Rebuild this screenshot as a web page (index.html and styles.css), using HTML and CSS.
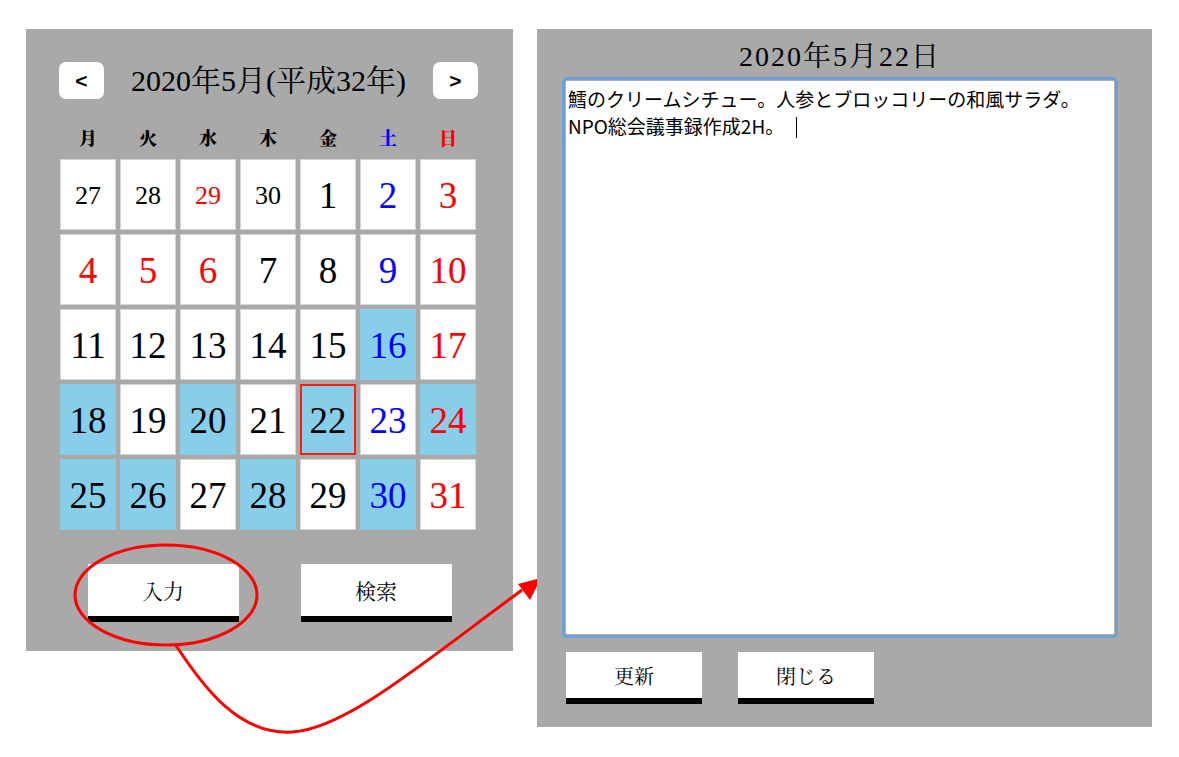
FILE: index.html
```html
<!DOCTYPE html>
<html lang="ja">
<head>
<meta charset="utf-8">
<title>カレンダー</title>
<link rel="stylesheet" href="styles.css">
</head>
<body>
<div class="page">
  <section class="cal">
    <div class="cal-head">
      <div class="nav-btn">&lt;</div>
      <div class="cal-title">2020年5月(平成32年)</div>
      <div class="nav-btn">&gt;</div>
    </div>
    <div class="weekdays">
      <span>月</span><span>火</span><span>水</span><span>木</span><span>金</span><span class="sat">土</span><span class="sun">日</span>
    </div>
    <div class="grid">
      <div class="cell small">27</div>
      <div class="cell small">28</div>
      <div class="cell small sun">29</div>
      <div class="cell small">30</div>
      <div class="cell">1</div>
      <div class="cell sat">2</div>
      <div class="cell sun">3</div>

      <div class="cell sun">4</div>
      <div class="cell sun">5</div>
      <div class="cell sun">6</div>
      <div class="cell">7</div>
      <div class="cell">8</div>
      <div class="cell sat">9</div>
      <div class="cell sun">10</div>

      <div class="cell">11</div>
      <div class="cell">12</div>
      <div class="cell">13</div>
      <div class="cell">14</div>
      <div class="cell">15</div>
      <div class="cell sat mark">16</div>
      <div class="cell sun">17</div>

      <div class="cell mark">18</div>
      <div class="cell">19</div>
      <div class="cell mark">20</div>
      <div class="cell">21</div>
      <div class="cell mark today">22</div>
      <div class="cell sat">23</div>
      <div class="cell sun mark">24</div>

      <div class="cell mark">25</div>
      <div class="cell mark">26</div>
      <div class="cell">27</div>
      <div class="cell mark">28</div>
      <div class="cell">29</div>
      <div class="cell sat mark">30</div>
      <div class="cell sun">31</div>
    </div>
    <div class="cal-actions">
      <div class="btn big">入力</div>
      <div class="btn big">検索</div>
    </div>
  </section>

  <section class="memo">
    <div class="memo-title">2020年5月22日</div>
    <div class="memo-text">鱈のクリームシチュー。人参とブロッコリーの和風サラダ。<br>NPO総会議事録作成2H。<span class="caret"></span></div>
    <div class="memo-actions">
      <div class="btn small-btn">更新</div>
      <div class="btn small-btn">閉じる</div>
    </div>
  </section>
</div>

<svg class="annot" width="1179" height="757" viewBox="0 0 1179 757" xmlns="http://www.w3.org/2000/svg">
  <defs>
    <clipPath id="leftOfPanel"><rect x="0" y="0" width="537" height="757"/></clipPath>
  </defs>
  <ellipse cx="166" cy="595" rx="91" ry="50" fill="none" stroke="#ff0000" stroke-width="3"/>
  <g clip-path="url(#leftOfPanel)">
    <path d="M175 644 C 205 690, 240 735, 292 732 C 345 729, 420 665, 522 590" fill="none" stroke="#ff0000" stroke-width="3"/>
    <polygon points="541,578 518,584 530,600" fill="#ff0000"/>
  </g>
</svg>
</body>
</html>
```

FILE: styles.css
```css
html, body {
  margin: 0;
  padding: 0;
  background: #ffffff;
}

body {
  font-family: "Liberation Serif", "Noto Serif CJK JP", "Noto Sans CJK JP", serif;
  color: #000;
  position: relative;
  width: 1179px;
  height: 757px;
  overflow: hidden;
}

.page {
  display: flex;
  align-items: flex-start;
  gap: 24px;
  padding: 29px 0 0 26px;
}

/* ---------- calendar ---------- */
.cal {
  width: 487px;
  height: 622px;
  box-sizing: border-box;
  background: #a9a9a9;
  padding-top: 33px;
}

.cal-head {
  width: 419px;
  margin-left: 33px;
  height: 37px;
  display: flex;
  align-items: center;
  justify-content: space-between;
}

.nav-btn {
  width: 45px;
  height: 37px;
  background: #fff;
  border-radius: 7px;
  display: flex;
  align-items: center;
  justify-content: center;
  font-family: "Liberation Sans", "Noto Sans CJK JP", sans-serif;
  font-size: 21px;
  font-weight: bold;
}

.cal-title {
  font-size: 30px;
  line-height: 37px;
  white-space: nowrap;
}

.weekdays {
  margin: 26px 0 0 34px;
  width: 416px;
  height: 24px;
  display: grid;
  grid-template-columns: repeat(7, 56px);
  column-gap: 4px;
  font-family: "Noto Serif CJK JP", "Noto Sans CJK JP", serif;
  font-weight: 900;
  font-size: 18px;
  line-height: 24px;
  text-align: center;
}

.grid {
  margin: 10px 0 0 34px;
  width: 416px;
  display: grid;
  grid-template-columns: repeat(7, 56px);
  grid-auto-rows: 71px;
  gap: 4px;
}

.cell {
  background: #fff;
  box-sizing: border-box;
  border: 1px solid #d6d6d6;
  display: flex;
  align-items: center;
  justify-content: center;
  font-size: 37px;
  line-height: 1;
  padding-top: 2px;
}

.cell.small {
  font-size: 26px;
}

.cell.mark {
  background: #87ceeb;
  border-color: #8ccbe4;
}

.cell.today {
  border: 2px solid #ff1a0a;
}

.sat { color: #0000ff; }
.sun { color: #ff0000; }

.cal-actions {
  margin-top: 34px;
  display: flex;
  justify-content: center;
  gap: 62px;
}

.btn {
  background: #fff;
  box-sizing: border-box;
  border-bottom: 6px solid #000;
  display: flex;
  align-items: center;
  justify-content: center;
  font-family: "Noto Serif CJK JP", "Noto Sans CJK JP", serif;
  font-size: 21px;
}

.btn.big {
  width: 151px;
  height: 58px;
}

/* ---------- memo ---------- */
.memo {
  width: 615px;
  height: 698px;
  box-sizing: border-box;
  background: #a9a9a9;
  padding: 8px 0 0 28px;
}

.memo-title {
  width: 550px;
  height: 40px;
  line-height: 40px;
  text-align: center;
  font-size: 28px;
  letter-spacing: 2px;
}

.memo-text {
  margin-top: 3px;
  width: 550px;
  height: 555px;
  box-sizing: border-box;
  background: #fff;
  border: 1px solid #b5aea8;
  border-radius: 2px;
  box-shadow: 0 0 0 3px #6f9fd8;
  padding: 4px 2px;
  font-family: "Noto Sans CJK JP", sans-serif;
  font-size: 19px;
  line-height: 27px;
  white-space: nowrap;
}

.caret {
  display: inline-block;
  width: 1px;
  height: 21px;
  background: #000;
  vertical-align: -4px;
  margin-left: 12px;
}

.memo-actions {
  margin-top: 17px;
  padding-left: 1px;
  display: flex;
  gap: 36px;
}

.btn.small-btn {
  width: 136px;
  height: 52px;
  font-size: 20px;
}

/* ---------- annotation ---------- */
.annot {
  position: absolute;
  left: 0;
  top: 0;
  pointer-events: none;
}
```
